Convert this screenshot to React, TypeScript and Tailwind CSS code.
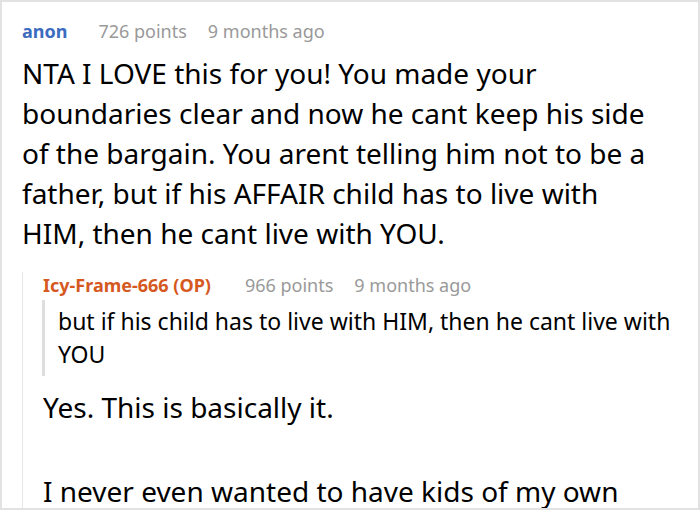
import React from 'react';

// Comment thread: top-level comment + OP reply with quote

const Meta: React.FC<{ name: string; nameClass: string; points: string; ago: string; gap: string }> = ({
  name,
  nameClass,
  points,
  ago,
  gap,
}) => (
  <div className="flex items-baseline text-[18px] leading-[26px] text-[#999]">
    <span className={`font-bold ${nameClass}`}>{name}</span>
    <span className={gap}>{points}</span>
    <span className="ml-[21px]">{ago}</span>
  </div>
);

const App: React.FC = () => {
  return (
    <div
      className="w-[700px] h-[510px] overflow-hidden bg-white border-2 border-[#e2e2e2] text-black"
      style={{ fontFamily: '"Noto Sans", "Open Sans", sans-serif' }}
    >
      <div className="pt-[16px] pl-[20px]">
        {/* Top comment */}
        <Meta name="anon" nameClass="text-[#3b6cc0]" points="726 points" ago="9 months ago" gap="ml-[31px]" />
        <p className="mt-[9px] w-[634px] text-[28px] leading-[40px]">
          NTA I LOVE this for you! You made your boundaries clear and now he cant keep his side of the bargain. You
          arent telling him not to be a father, but if his AFFAIR child has to live with HIM, then he cant live with
          YOU.
        </p>

        {/* Reply */}
        <div className="mt-[19px] border-l border-[#e6e6e6] pl-[20px] pb-[40px]">
          <Meta
            name="Icy-Frame-666 (OP)"
            nameClass="text-[#d5591f]"
            points="966 points"
            ago="9 months ago"
            gap="ml-[34px]"
          />
          <blockquote className="mt-[2px] -ml-[1px] w-[640px] border-l-[3px] border-[#dedede] pl-[13px] py-[5px] text-[23px] leading-[33px]">
            but if his child has to live with HIM, then he cant live with YOU
          </blockquote>
          <p className="mt-[11px] text-[28px] leading-[40px]">Yes. This is basically it.</p>
          <p className="mt-[44px] text-[28px] leading-[40px]">I never even wanted to have kids of my own</p>
        </div>
      </div>
    </div>
  );
};

export default App;
